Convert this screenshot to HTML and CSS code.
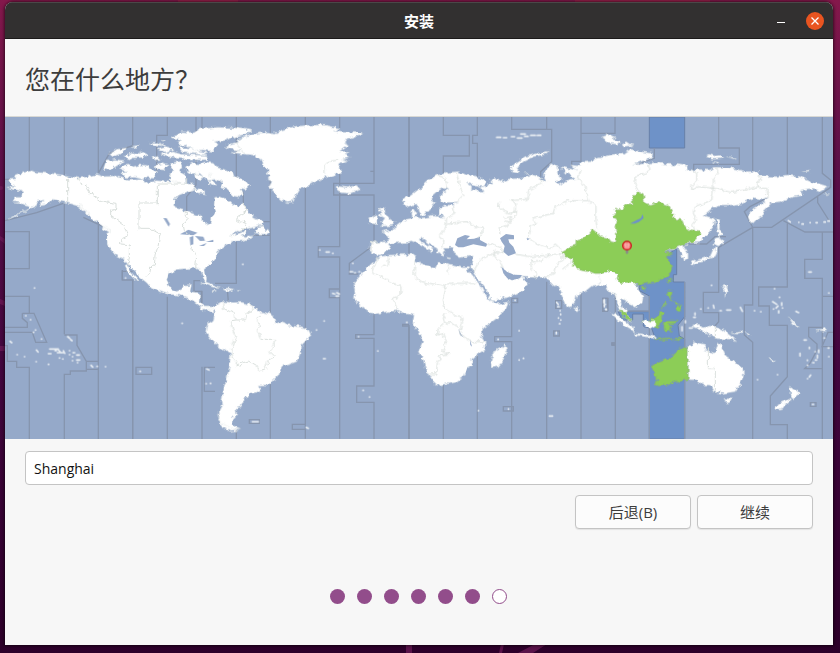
FILE: index.html
```html
<!DOCTYPE html>
<html lang="zh-CN">
<head>
<meta charset="utf-8">
<meta name="viewport" content="width=device-width, initial-scale=1">
<title>安装</title>
<link rel="stylesheet" href="styles.css">
</head>
<body>
<svg class="wallpaper" aria-hidden="true" viewBox="0 0 840 653" preserveAspectRatio="none">
  <path class="glow" d="M178 0h60v4h-60zM575 0h135v4H575z"/>
  <path class="streak" d="M0 299l5 2v5l-5-2zM0 346h5v5H0zM0 236l5 3v5l-5-4zM406 644h6v9h-6zM501 644h3l-2 9h-3zM535 644h12l-14 9h-15z"/>
  <circle class="streak" cx="1" cy="188" r="2"/>
</svg>
<div class="window">
  <header class="titlebar">
    <span class="title">安装</span>
    <div class="window-controls">
      <button class="control minimize" type="button" aria-label="最小化"><svg viewBox="0 0 18 18"><path d="M5 10.5h8"/></svg></button>
      <button class="control close" type="button" aria-label="关闭"><svg viewBox="0 0 18 18"><path d="M5.5 5.5l7 7M12.5 5.5l-7 7"/></svg></button>
    </div>
  </header>
  <main class="page">
    <h1>您在什么地方？</h1>
    <svg class="map" viewBox="0 0 2484 966" role="img" aria-label="时区地图">
      <!-- roughens the coastlines -->
      <filter id="coast" filterUnits="userSpaceOnUse" x="0" y="0" width="2484" height="966" color-interpolation-filters="sRGB">
        <feTurbulence type="fractalNoise" baseFrequency=".07" numOctaves="2" seed="4"/>
        <feDisplacementMap in="SourceGraphic" scale="16" xChannelSelector="R" yChannelSelector="G"/>
      </filter>

      <rect class="sea" width="2484" height="966"/>

      <!-- selected zone -->
      <g class="selected-sea">
        <path d="M1933 0h106v93h-106z"/>
        <path transform="translate(1785 459)" d="M230-65V14H220V36H254V140L234 165 238 198 254 207V507H148V205L162 195 155 175 130 170V132H98V150H65L55 125H148V78L118 62 120 40 190 20 195-40Z"/>
      </g>

      <!-- zone lines at sea -->
      <g class="zones">
        <g transform="translate(-15 -21)">
          <path d="M88 21V183M193 21V195M193 280V673M295 21V190L328 130 398 107V21M502 21V76H470V185M588 21V225L560 260V310M15 208H30M15 332L110 308 190 280M15 365H88V476H15M295 330V754M250 322L310 350M398 986V510M367 510V484H398"/>
        </g>
        <g transform="translate(585 -21)">
          <path d="M6 21V60M109 21V205M109 395V510M211 21V986M316 21V45M316 232V986M419 21V55M419 190V410H355V441H419V986M522 21V220H401V255H522V405L448 460V492H475M627 21V260M627 400V440M130 245V285M190 335H211V376H160M511 184H522"/>
        </g>
        <g transform="translate(1185 -21)">
          <path d="M27 21V245M130 21V76H208V138H130V190M232 21V76H218V100H232V200M335 21V58H455V155L422 185V200M440 21V58M543 21V154H515V170M543 70H645V21"/>
        </g>
        <g transform="translate(1785 -21)">
          <path d="M163 114V145L100 166M356 21V114H418V163H281V180M458 21V183M562 21V193M667 21V190L692 210V232L515 352H458L433 305 450 290 505 262M653 258V278L688 333M550 332L615 366H699M458 352V510M562 340V510M667 366V448H614V505M356 510V412L458 352M265 402H320L345 380H378"/>
        </g>
        <g transform="translate(-15 459)">
          <path d="M15 79H88V130M67 130H102L140 217H107L97 187H15M15 172H82V158L67 145V130M15 227H22V274H50V292H88V507M193 195H231V226L259 274H295V298H259V303H211V313H193V507M259 274V298M295 298V507M367 0V30H398V507M408 292H455V313H408ZM502 80V507M606 290V507M645 292H613V364H645M604 100V64H582V32H600"/>
        </g>
        <g transform="translate(585 459)">
          <path d="M6 62V100M85 95L82 60M45 40H109V0M109 480V507M148 449H178V460H148ZM316 463H277V478H316M419 57H388V83H419M522 133V194H467V205H522V348H470V397H522V507M627 165V507M627 163H608V168H627"/>
        </g>
        <g transform="translate(1185 459)">
          <path d="M27 170V507M130 345V507M232 255V507M335 85V200H284V215H335V507M335 85H353V98H335M440 35V507M543 70V507M467 92H485V115H467ZM461 183H478V198H461ZM609 85H624V122H609ZM310 410H340V423H310ZM636 219H645V224H636Z"/>
        </g>
        <g transform="translate(1785 459)">
          <path d="M46 50V507M148 78V507M254 36V507M148 123H55M356 0V67H310V128H356V155L345 168M458 0V105H433V195L458 217V507M562 0V51H476V108H508V166H562V320L511 378V464H562V507M614 0V25H667V507M667 79H699M699 187H684L666 230H699M666 172H626V200L651 222V240L630 280 614 296H666M631 398H648V409H631ZM36 219H46V226H36ZM8 85H22V124H8Z"/>
        </g>
      </g>

      <!-- land -->
      <g class="land coast">
        <g transform="translate(-15 -21)">
          <path d="M20 232L45 228 35 222 28 208 50 206 42 199 70 188 98 182 110 187 150 190 203 197 236 204 265 200 290 193 312 200 345 198 385 211 428 208 434 220 470 212 512 216 508 198 520 190 530 202 560 222 582 222 578 233 588 236 555 248 535 256 523 270 521 290 548 298 590 314 605 318 610 334 625 345 634 337 636 322 648 305 642 290 644 262 660 260 682 268 700 285 716 290 726 278 738 298 755 318 790 332 788 345 760 352 730 358 700 370 688 378 712 372 735 364 735 372 722 378 745 380 765 376 725 393 700 394 675 408 650 425 648 445 630 465 612 478 614 492 620 506 618 518 608 500 602 482 590 474 560 476 530 478 505 490 500 512 512 536 530 544 545 538 552 525 575 523 570 545 590 548 602 556 600 578 612 588 632 588 645 600 640 606 620 598 600 588 580 572 540 556 500 552 455 535 440 518 415 498 405 486 385 465 372 448 345 435 322 405 320 370 330 365 310 350 280 328 258 308 232 288 200 278 165 270 155 268 142 282 118 285 130 270 110 275 105 290 60 312 25 328 40 318 85 298 92 288 75 285 60 278 35 275 42 262 65 262 68 245 50 240Z"/>
          <path d="M380 463L392 486 410 504 420 516 404 508 386 490 374 468ZM303 347L330 358 332 368 312 358ZM235 282L250 288 248 298ZM252 296L270 312 266 320Z"/>
          <path d="M318 154L345 148 374 152 355 165 330 180 310 178ZM358 174L385 162 400 170 420 165 445 167 450 180 470 188 462 205 440 202 430 208 405 202 380 202 365 194 378 184ZM328 132L350 118 380 113 370 122 360 132 345 138ZM396 109L420 105 412 112ZM368 140L385 136 395 128 412 130 425 124 445 135 430 142 400 144 388 150ZM448 98L468 97 485 110 465 108ZM474 104L492 101 497 108ZM474 118L500 111 520 118 502 126 480 122ZM482 132L520 126 545 133 620 136 624 149 560 150 545 143 500 140ZM468 166L485 160 505 166 492 180 472 178ZM508 160L540 154 546 168 538 185 555 195 558 218 535 220 512 210 512 188 522 180ZM535 112L570 114 590 121 625 128 612 134 550 128ZM482 88L497 88 490 94ZM455 142L475 139 484 148 462 150Z"/>
          <path d="M510 82L530 76 545 65 582 68 600 57 650 52 700 53 740 58 755 62 738 72 700 82 672 92 640 95 655 103 636 124 610 120 585 122 560 105 540 108 530 96 546 90Z"/>
          <path d="M556 170L575 160 600 162 615 156 640 160 650 172 672 178 700 193 730 212 750 225 736 238 722 234 730 250 722 262 700 258 680 238 662 232 668 216 645 208 622 212 600 190 578 194 562 184ZM586 188L610 200 602 212 588 204ZM584 234L610 240 616 252 590 248ZM626 192L638 196 632 204ZM630 210L650 222 642 228 626 220Z"/>
          <path d="M765 368L778 350 790 348 792 358 808 365 804 374 780 372ZM722 389L745 378 756 383 728 393Z"/>
        </g>
        <g transform="translate(585 -21)">
          <path d="M75 108L112 100 110 92 132 82 118 84 155 72 205 66 225 70 240 62 280 50 330 45 380 46 420 55 400 63 425 67 490 68 462 80 438 88 432 98 446 105 434 112 418 125 445 124 432 134 450 142 428 148 442 152 415 162 425 185 400 195 350 212 320 230 298 236 290 250 280 275 262 278 240 268 225 250 208 228 216 215 204 208 210 196 196 190 205 180 190 165 185 148 160 135 130 132 95 128 118 122 88 116Z"/>
          <path d="M408 235L412 228 440 233 470 226 480 238 450 250 425 248 414 242ZM507 325L518 322 522 314 535 318 534 332 525 342 506 340ZM535 296L555 292 550 305 565 315 570 328 585 335 578 346 540 350 556 341 544 335 552 324 540 318 546 308Z"/>
        </g>
        <g transform="translate(1185 -21)">
          <path d="M-88 398L-40 395-32 390-36 375-55 365-38 360-30 364-15 352 0 340 20 328 35 325 32 308 42 298 48 308 42 320 62 325 100 318 135 322 120 312 120 298 130 288 160 288 165 280 175 276 130 278 122 270 124 255 135 242 147 234 130 232 115 240 95 258 92 270 105 280 92 298 80 304 68 318 58 305 55 290 48 282 25 290 12 282 10 265 30 258 60 235 85 210 115 195 145 188 175 185 200 195 240 205 258 218 250 227 225 225 200 218 215 228 214 240 250 245 240 232 275 222 272 210 290 205 310 215 325 207 360 205 390 198 375 190 405 200 425 205 440 215 430 195 445 170 460 162 475 172 472 190 486 206 470 215 475 225 510 208 525 205 500 190 490 180 482 170 500 175 530 180 512 165 540 168 535 158 575 155 580 148 605 142 640 133 670 132 690 118 730 126 758 130 755 143 700 165 740 160 770 158 800 162 830 165 830 160 860 165 862 180 882 185 890 178 930 180 940 172 985 172 1040 185 1075 185 1080 198 1130 200 1160 195 1200 200 1235 215 1260 222 1285 230 1260 243 1240 235 1200 240 1210 255 1175 262 1140 275 1115 278 1095 300 1090 318 1065 330 1052 343 1047 318 1060 295 1090 278 1105 262 1080 270 1060 265 1040 270 1030 280 990 285 950 285 912 318 945 325 940 350 920 375 898 398 882 398 840 400 850 408 864 430 864 447 850 450 844 430 832 414 700 440 640 500 700 520 708 540 728 560 726 578 705 592 685 580 670 570 655 568 652 580 672 598 690 625 692 634 675 622 655 596 648 570 645 550 628 545 620 530 605 520 575 528 560 540 530 555 525 575 510 595 500 590 480 540 478 525 462 528 445 510 430 502 380 502 355 500 330 490 318 488 305 472 308 480 325 505 350 508 365 500 385 518 370 540 330 560 275 574 262 545 222 492 215 470 222 438 200 440 180 443 165 432 160 418 155 412 130 412 135 425 128 440 115 428 108 412 85 400 62 380 58 390 98 415 98 426 80 415 50 398 35 392 20 398 0 398-30 400-35 420-60 435-80 432-90 425Z"/>
          <path d="M-60 440L-30 435 40 432 50 440 45 455 75 465 105 472 112 460 140 460 185 470 212 470 200 480 215 492 240 525 255 555 275 575 290 582 328 575 320 595 290 625 250 655 243 675 255 695 255 718 225 738 215 748 218 768 200 778 190 800 165 818 130 823 110 826 98 815 78 780 70 750 55 725 68 695 55 660 38 645 42 615 10 610-10 602-45 606-80 613-110 595-140 565-135 550-138 520-110 485-90 465Z"/>
          <path d="M315 703L320 720 306 755 295 770 278 773 273 755 278 740 276 728 300 715ZM525 590L538 598 536 605 526 604Z"/>
          <path d="M330 178L345 160 375 140 420 128 448 124 440 132 400 140 370 155 350 172 360 188 340 184ZM140 442L155 444 148 447ZM190 443L205 440 198 446ZM85 425L98 424 96 432Z"/>
        </g>
        <g transform="translate(1785 -21)">
          <path d="M4 82L30 72 46 82 36 88 60 94 55 103 28 100ZM62 105L78 95 90 103 102 106 72 110ZM318 140L328 133 345 138 360 136 372 144 340 148ZM382 140L410 144 400 146ZM340 155L360 158 350 162ZM605 184L628 180 630 184ZM670 250L690 252 680 254ZM350 325L360 330 358 355 368 372 354 378ZM345 385L358 382 375 395 355 408 342 402ZM275 455L310 445 335 435 345 412 352 412 350 430 345 440 330 442 310 455 285 460 278 468 272 462Z"/>
        </g>
        <g transform="translate(585 459)">
          <path d="M0 112L14 108 20 113 43 108 65 95 82 96 100 98 125 97 150 102 180 125 215 132 228 150 222 162 240 157 270 168 300 170 325 178 333 195 305 225 303 245 290 275 270 282 245 290 235 315 220 330 205 345 175 345 182 360 165 368 145 370 145 382 128 386 130 398 120 403 125 410 108 415 110 430 98 445 95 460 102 468 122 476 95 478 70 468 58 448 58 425 68 405 66 390 70 360 80 330 88 290 92 250 60 235 40 215 17 185 20 165 40 150 46 122 35 115 15 122 0 118Z"/>
          <path d="M0 38L18 36 45 46 62 52 40 52 15 42ZM68 57L85 54 102 58 80 64ZM37 61H48V64H37ZM112 61H120V63H112ZM50 425L62 455 95 476 115 482 90 484 65 470Z"/>
        </g>
        <g transform="translate(1785 459)">
          <path d="M264 232L285 218 318 223 310 238 345 250 355 215 365 230 375 255 410 280 430 298 430 320 418 345 405 365 385 368 370 371 345 367 335 350 325 345 310 345 290 330 264 328ZM372 385L395 387 390 397 380 400ZM568 348L580 358 602 368 588 378 580 387 573 372ZM570 385L575 388 552 405 545 415 530 419 522 412 545 397ZM278 162L295 160 300 168 312 173 330 168 350 170 365 178 385 192 410 212 385 207 350 206 320 190 300 178 282 172ZM392 190L420 186 426 178 428 186 412 192ZM32 128L55 136 80 158 100 170 103 187 75 170 52 148ZM103 189L130 192 165 197 165 203 135 200 105 195ZM506 265L520 270 524 276 512 272ZM438 186L450 194 445 196ZM368 48L376 46 382 60 376 84 374 62ZM565 140L585 160 598 172 580 164ZM650 180L680 174 678 184Z"/>
        </g>
      </g>

      <!-- inland water -->
      <g class="sea">
        <path transform="translate(-15 -21)" d="M540 373L565 359 592 368 580 376ZM569 382L580 378 580 403 571 406ZM585 378L610 380 615 392 600 393ZM597 408L620 399 612 408ZM617 396L640 389 640 396ZM490 324L500 325 510 342 506 350Z"/>
        <path transform="translate(1185 -21)" d="M165 405L172 385 195 375 210 378 200 388 222 386 240 380 240 390 262 402 258 410 220 403 190 412 175 412ZM300 385L318 372 342 376 342 388 325 388 328 398 340 410 348 430 325 438 310 425 314 408 305 395ZM380 384L390 386 382 391ZM175 656L182 670 190 682 180 675ZM210 688L216 710 211 705ZM305 472L320 485 340 494 366 495 360 504 335 510 322 505 310 490Z"/>
      </g>

      <!-- zone borders on land -->
      <g class="borders coast">
        <g transform="translate(-15 -21)">
          <path d="M203 197V278M233 204L240 218 262 232 268 248 300 272 348 280V298L332 302V315L372 345 382 378 362 388V402L388 404V440L384 465M560 205V222H472V279H417V358H455L480 372 475 405 465 438 463 465 452 468 450 490 440 500M556 300V320L562 330 550 345 553 362 570 375M572 405L578 425 590 435 587 475M730 282L738 305 712 320 710 332 738 340 740 352 725 360"/>
        </g>
        <g transform="translate(585 -21)">
          <path d="M108 100L132 130M375 190V165L385 155 415 150M535 395H515V430M535 440L520 475 515 487 603 530V555L578 565 592 590 587 605M565 440V465L545 470"/>
        </g>
        <g transform="translate(1185 -21)">
          <path d="M115 198L137 205 142 235M170 190L178 225 190 255 170 275M160 288L165 312 140 325 138 345 132 360 118 378 132 390 122 415M138 340L205 335 220 348 248 355 245 370 235 385M425 205L430 215 385 240V268L330 272 347 280 345 320 325 345 298 355 300 370M298 275L296 292 310 302 330 310 347 305M310 325L335 320 330 335 310 333M540 180L532 205 555 230 565 270 588 290V330L592 355M565 272L505 272 465 290 460 310 395 325 410 340 390 348V370L380 385M258 398L300 410 310 425 280 430 240 450 220 485M280 430L300 455 310 475M390 388L415 405 450 415 470 405 482 420M345 432L390 440 450 435 485 430M450 435L425 450 400 460 392 450 395 478 410 490 405 505M488 435L490 450 465 470 462 490 435 503M515 450L505 465 490 478M45 455L42 500 65 515 138 530 145 520H228M138 530L130 570 135 595 162 612 182 620 188 635 180 660 188 680 212 695H253M135 610L130 625 135 640 115 655 112 675 128 672 137 690 128 725 148 732 118 735 120 752 112 758 110 792H88M135 640L155 638 180 655M145 470V490M280 440L285 420"/>
        </g>
        <g transform="translate(1785 -21)">
          <path d="M145 160L150 180 130 192 108 198 105 225 115 245M275 180L290 190V210L275 225V240L295 230 345 235 395 247 435 240 480 228M350 172L355 190 340 210V245L335 270 282 292 280 310 290 330 278 345 285 360M475 198L485 210 468 215 480 235 500 235 505 262M235 410L265 405M0 500L25 485 50 487 52 510"/>
        </g>
        <path transform="translate(585 459)" d="M72 98L70 115 90 125 100 120 105 150 92 152 98 180 108 200 95 240 98 260 110 275 108 285 145 273 168 285 180 305 195 300 205 270 225 260 210 245 228 208H185L172 180 180 165 170 145 185 135M150 102L160 118 140 130 135 150 105 150"/>
        <path transform="translate(1785 459)" d="M325 235V295H346V367M346 170V205M60 60L50 75 55 95"/>
      </g>

      <!-- land inside the selected zone -->
      <g class="selected-land coast">
        <path transform="translate(1785 -21)" d="M116 245L130 252 133 280 150 284 165 278 180 278 205 287 220 312 220 325 245 330 255 350 270 360 300 363 302 370 280 395 260 397 230 412 205 418 188 425 218 432 198 440 212 462 215 478 205 494 190 505 165 518 125 522 100 520 70 520 58 516 50 510 52 490 30 485 0 490-15 490-30 485-60 480-83 462-78 445-105 440-115 425-92 412-72 405-72 390-48 385-35 370-25 365-23 358-5 372 2 380 25 385 34 396 48 398 50 372 45 350 52 335 45 325 36 322 48 308 46 298 70 294 80 285 98 285 97 262 108 258 108 248Z"/>
        <path transform="translate(1785 459)" d="M160 282L185 272 205 266 225 248 250 232 264 237V328L225 337 205 345 180 348 168 345 170 330 157 295ZM125 155L150 151 172 140 182 124 193 128 184 142 188 152 175 172ZM62 122L80 130 92 150 78 146 68 136ZM122 50L138 52 130 62ZM204 28L215 24 206 40ZM205 60L216 62 215 76 210 82 220 90 205 84 202 72ZM222 95L234 100 230 108ZM228 115L240 104 245 122 236 125ZM184 112L198 98 200 102 188 114ZM192 165L198 154 235 154 222 160 202 162 218 172 208 174 215 188 205 178 200 186 194 185ZM163 203L182 204 190 208 215 206 215 210 180 210ZM222 208L248 203 235 212Z"/>
      </g>
      <g class="land coast">
        <path transform="translate(1785 459)" d="M125 155L142 150 152 154 165 152 169 164 150 176 132 168Z"/>
        <path transform="translate(1785 -21)" d="M0 492L28 482 52 490 50 512 65 518 100 518 120 545 128 560 125 580 105 590 75 570 60 568 68 595 82 602 75 606 50 580 48 550 25 545 18 530 0 525Z"/>
      </g>
      <path class="lake" transform="translate(1785 -21)" d="M90 341L110 330 122 325 128 313 131 324 116 336 104 341Z"/>

      <!-- small islands -->
      <g class="islets">
        <path transform="translate(-15 459)" d="M103 54h1M77 137h1M91 149h1M106 180h1M100 187h1M124 207h1M30 214l5 4M51 254h1M73 260h1M109 240l5 6M108 275h1M145 283h1M145 251h8M149 237h26M165 242h4M172 248h20M173 238l10 10M190 242l4 8M208 242h1M208 254h1M178 264h1M188 267h1M217 260h1M217 272h1M219 248h5M230 255h8M230 270h9M232 278h1M203 200l6 5M212 209l4 3M273 286l5 5M291 289h1M316 290h1M420 304h1M546 160h1M376 24h1"/>
        <path transform="translate(585 459)" d="M20 297l7 3M18 341h1M31 340h1M372 153h1M349 180h1M370 266h6M157 455h18M398 70l6 2M410 68l8 4M408 78h8M475 200h1M533 243h1M489 361h1M508 381h1M319 472l6 3M620 157h1M359-60h1M378-54h10M398-50h1M128-17h1M458-20h1M450 5h8M464 8h2M477 5h2"/>
        <path transform="translate(1185 459)" d="M345 91h1M357 182h1M294 208h1M357 270h1M370 265h1M325 417h1M235 422h1M448 438h10M470 97l5 6M473 110h4M480 122h1M482 132v2M475 144h1M482 150h1M478 161h2M469 187v4M613 90v8M613 104v6M617 118h2"/>
        <path transform="translate(1185 -21)" d="M290 82h12M310 83h10M334 80h10M352 84h14M362 72h14M374 79h10M392 76h14M412 76h10"/>
        <path transform="translate(1785 459)" d="M12 90v8M14 103h2M18 119h1M334 46h1M360 122h4M340 106l2 8M324 114h1M302 117h1M285 129v6M281 142h5M256 152v6M246 170v12M268 174h8M380 120h12M421 112l6 12M463 122h1M482 125h1M523 56h1M538 82h1M518 95l12 8M528 114l6-6M545 98v8M536 122v7M520 117h1M547 114h1M588 124l8 4M612 210h7M628 232v4M600 250v8M622 270v2M622 286h1M638 278h4M645 245h1M656 240v8M652 256v8M646 270h4M684 234h3M686 260h1M672 204h2M632 315l-4 6M622 326h1M638 403h2M532 314h1M472 329h1M626 6h8M686 69h1"/>
        <path transform="translate(1785 -21)" d="M565 332l6 4M596 337h1M606 342h4M630 338h1M648 338h4M672 336h4M684 333h4"/>
      </g>

      <!-- location pin -->
      <g transform="translate(1866 386)">
        <path class="pin-stem" d="M-4 12h8v10l-4 3-4-3z"/>
        <circle class="pin-head" r="13"/>
        <path class="pin-mark" d="M-6-7H6V2H-6zM-6-2H6M-7 5H7"/>
      </g>
    </svg>
    <form class="form">
      <input class="city" type="text" value="Shanghai" aria-label="城市">
      <div class="actions">
        <button type="button">后退(B)</button>
        <button type="button">继续</button>
      </div>
    </form>
    <div class="steps" aria-hidden="true">
      <i></i><i></i><i></i><i></i><i></i><i></i><i class="next"></i>
    </div>
  </main>
</div>
</body>
</html>
```
FILE: styles.css
```css
* { box-sizing: border-box; }

body {
  margin: 0;
  min-height: 100vh;
  padding: 2px 7px 8px 5px;
  display: flex;
  flex-direction: column;
  position: relative;
  background: linear-gradient(#84184b 0, #5b1048 25%, #43063f 55%, #2d002a 100%);
  color: #3d3d3d;
  font: 15px/20px "Open Sans", "Noto Sans CJK SC", sans-serif;
}

.wallpaper { position: absolute; inset: 0; width: 100%; height: 100%; }
.glow { fill: #a1244b; opacity: .6; }
.streak { fill: #6d1b59; opacity: .7; }

.window {
  flex: 1;
  display: flex;
  flex-direction: column;
  position: relative;
  border-radius: 8px 8px 0 0;
  overflow: hidden;
  background: #f7f7f7;
  box-shadow: 0 0 3px 1px rgba(0, 0, 0, .55);
}

.titlebar {
  display: grid;
  grid-template-columns: 1fr auto 1fr;
  align-items: center;
  height: 37px;
  padding: 0 9px;
  background: #323030;
  border-top: 1px solid #4a4848;
  border-bottom: 1px solid #1c1a1a;
  color: #fff;
}
.title { grid-column: 2; font-weight: 700; }
.window-controls { display: flex; justify-content: flex-end; gap: 16px; }
.control {
  width: 18px;
  height: 18px;
  padding: 0;
  border: 0;
  border-radius: 50%;
  background: none;
}
.control svg { display: block; }
.control path { fill: none; stroke: #fff; stroke-width: 1.3; }
.minimize path { stroke-width: 1; }
.close { background: #e95420; }

.page { flex: 1; display: flex; flex-direction: column; }

h1 {
  margin: 0;
  padding: 22px 20px 18px;
  font-size: 25px;
  line-height: 37px;
  font-weight: 400;
  border-bottom: 1px solid #d8d8d4;
}

.map { display: block; width: 100%; height: auto; }
.coast { filter: url(#coast); }
.sea { fill: #95a9c9; }
.selected-sea { fill: #6e92c8; stroke: #6880a8; stroke-width: 3; }
.zones { fill: none; stroke: #8695ae; stroke-width: 4; }
.land { fill: #fff; stroke: #d6dfdf; stroke-width: 1; }
.borders { fill: none; stroke: #d9dfdc; stroke-width: 3; stroke-linejoin: round; }
.selected-land { fill: #8ccd57; stroke: #89b36c; stroke-width: 2; }
.lake { fill: #6e92c8; }
.islets { fill: none; stroke: #e9eef3; stroke-width: 5; stroke-linecap: round; }
.pin-head { fill: #f26f70; stroke: #c92522; stroke-width: 4; }
.pin-stem { fill: #889084; }
.pin-mark { fill: none; stroke: #fbb0b0; stroke-width: 3; }

.form { padding: 12px 20px 0; }
.city {
  display: block;
  width: 100%;
  height: 34px;
  padding: 0 8px;
  border: 1px solid #c4c4c4;
  border-radius: 4px;
  background: #fff;
  color: #111;
  font: 14px/20px "Open Sans", "Noto Sans CJK SC", sans-serif;
}
.actions { display: flex; justify-content: flex-end; gap: 6px; margin-top: 10px; }
.actions button {
  width: 116px;
  height: 34px;
  padding: 0;
  border: 1px solid #c4c4c4;
  border-radius: 4px;
  background: #fcfcfc;
  box-shadow: 0 1px 1px rgba(0, 0, 0, .08);
  color: #3d3d3d;
  font: inherit;
}

.steps {
  display: flex;
  justify-content: center;
  gap: 12px;
  margin-top: auto;
  padding: 20px 2px 41px 0;
}
.steps i { width: 15px; height: 15px; border-radius: 50%; background: #924d8b; }
.steps .next { border: 1px solid #924d8b; background: #fff; }
```
